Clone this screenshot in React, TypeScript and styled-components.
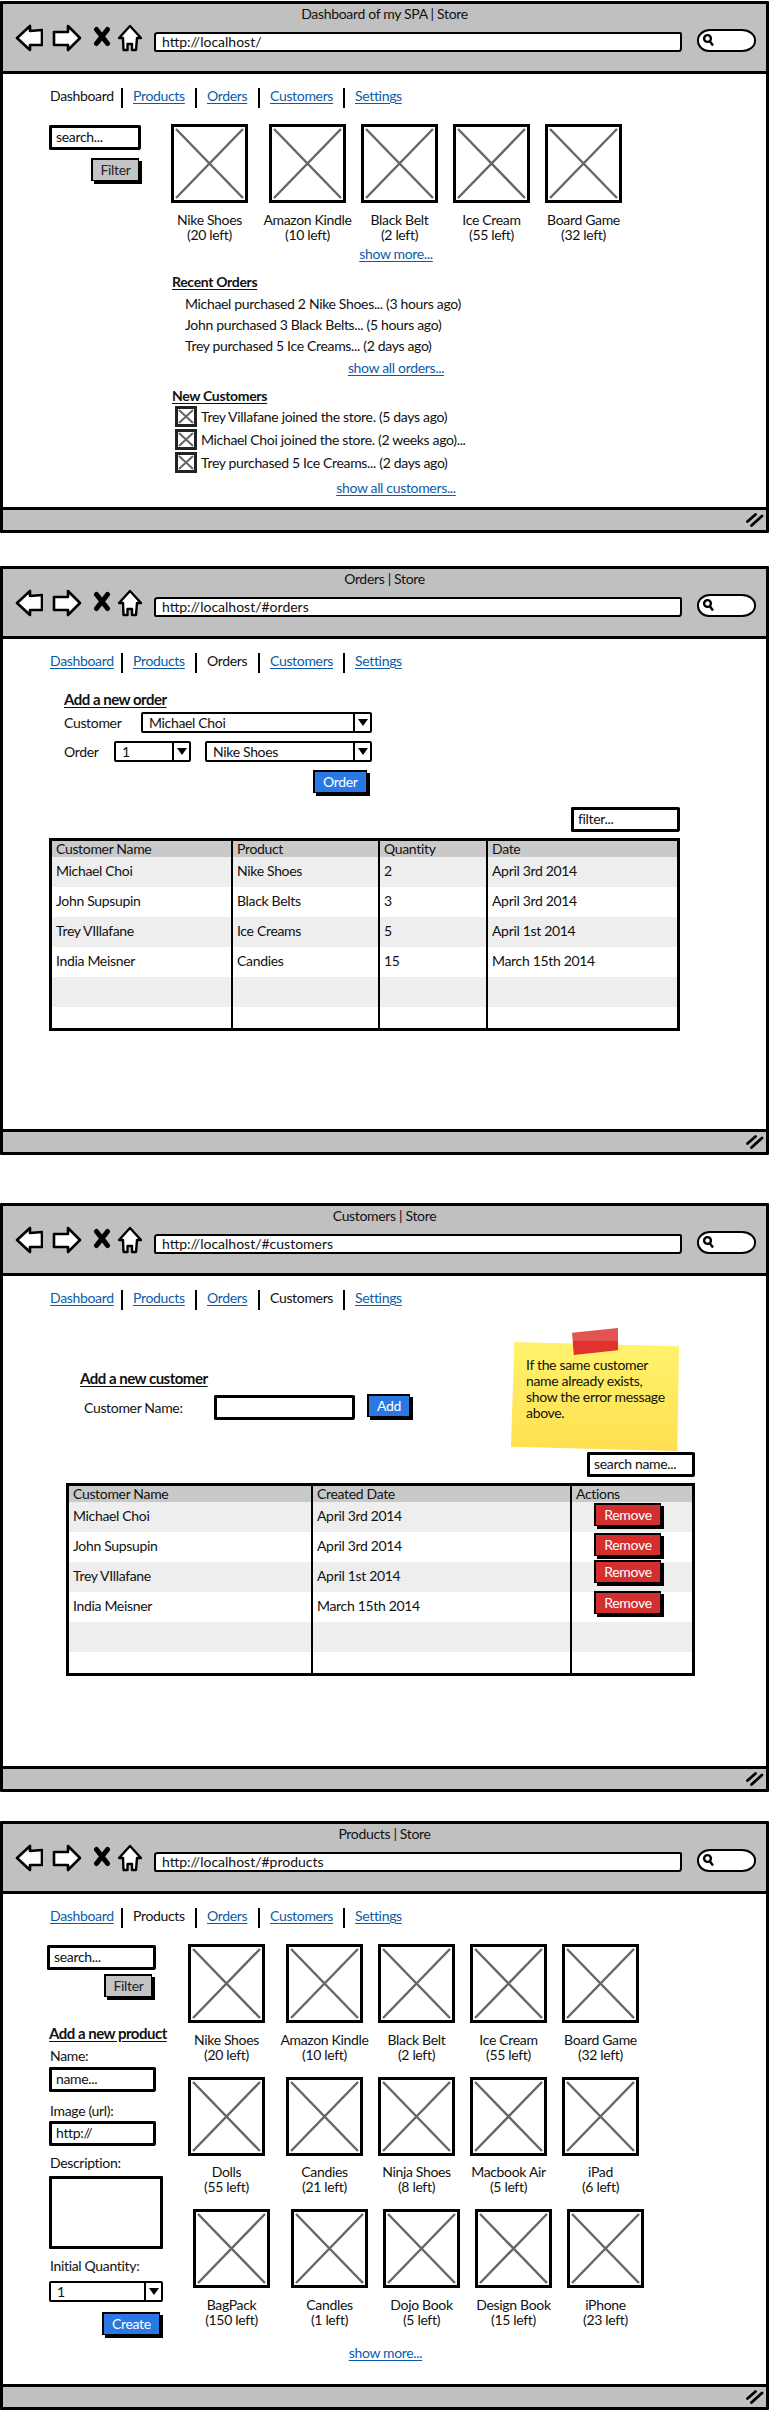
import React from "react";
import styled, { createGlobalStyle } from "styled-components";

const FONT = `Lato, "Liberation Sans", sans-serif`;

const GlobalStyle = createGlobalStyle`
  * { box-sizing: border-box; }
  body {
    margin: 0;
    background: #fff;
    color: #111;
    font-family: ${FONT};
    font-size: 14px;
    line-height: 15px;
    letter-spacing: -0.33px;
  }
`;

const TABS = [
  { name: "Dashboard", w: 74 },
  { name: "Products", w: 74 },
  { name: "Orders", w: 63 },
  { name: "Customers", w: 85 },
  { name: "Settings", w: 60 },
];

const Tab = ({ name, w, active, last }: { name: string; w: number; active: boolean; last: boolean }) => (
  <TabItem $w={w} $last={last}>
    {active ? <span>{name}</span> : <TextLink>{name}</TextLink>}
  </TabItem>
);

const BrowserWindow = ({
  title,
  url,
  active,
  height,
  top,
  children,
}: {
  title: string;
  url: string;
  active: string;
  height: number;
  top: number;
  children: React.ReactNode;
}) => (
  <Frame $h={height} $top={top}>
    <TitleBar>
      <TitleText>{title}</TitleText>
      <NavRow>
        <ToolIcon viewBox="0 0 28 28" $w={28}>
          <polygon points="2,14 15,2 15,7 27,6 27,21 15,21 15,26" fill="#fff" stroke="#000" strokeWidth="2.6" strokeLinejoin="round" />
        </ToolIcon>
        <ToolIcon viewBox="0 0 30 28" $w={30} $ml={9}>
          <polygon points="2,8 16,8 16,2 28,14 16,26 16,21 2,21" fill="#fff" stroke="#000" strokeWidth="2.6" strokeLinejoin="round" />
        </ToolIcon>
        <ToolIcon viewBox="0 0 18 28" $w={18} $ml={11}>
          <path d="M3.5 5.5 L14.5 19.5 M14.5 5.5 L3.5 19.5" stroke="#000" strokeWidth="5" strokeLinecap="round" />
        </ToolIcon>
        <ToolIcon viewBox="0 0 24 28" $w={24} $ml={7}>
          <polygon points="12,2 23,14 19,14 18,26 14,26 14,20 9.5,20 9.5,26 5.5,26 5,14 1,14" fill="#fff" stroke="#000" strokeWidth="2.4" strokeLinejoin="round" />
        </ToolIcon>
        <UrlBox>{url}</UrlBox>
        <SearchPill>
          <svg width="13" height="14" viewBox="0 0 13 14">
            <circle cx="5.5" cy="5.5" r="3.4" fill="#fff" stroke="#000" strokeWidth="2.4" />
            <path d="M8 8.5 L11 12.5" stroke="#000" strokeWidth="2.4" />
          </svg>
        </SearchPill>
      </NavRow>
    </TitleBar>
    <Content>
      <TabRow>
        {TABS.map((t, i) => (
          <Tab key={t.name} name={t.name} w={t.w} active={t.name === active} last={i === TABS.length - 1} />
        ))}
      </TabRow>
      {children}
    </Content>
    <BottomBar>
      <svg width="18" height="14" viewBox="0 0 18 14">
        <path d="M1.5 8.5 L9.5 1.5 M5.5 12.5 L16 3" stroke="#000" strokeWidth="2.8" strokeLinecap="round" />
      </svg>
    </BottomBar>
  </Frame>
);

const Placeholder = () => (
  <ImageBox>
    <svg width="100%" height="100%" viewBox="0 0 70 73" preserveAspectRatio="none">
      <path d="M2 2 L68 71 M68 2 L2 71" stroke="#666" strokeWidth="2.4" />
    </svg>
  </ImageBox>
);

const ProductCard = ({ name, left }: { name: string; left: string }) => (
  <Card>
    <Placeholder />
    <CardLabel>
      <span>{name}</span>
      <span>({left})</span>
    </CardLabel>
  </Card>
);

const ProductRow = ({ items, indent }: { items: string[][]; indent?: number }) => (
  <CardRow $indent={indent}>
    {items.map(([name, left]) => (
      <ProductCard key={name} name={name} left={left} />
    ))}
  </CardRow>
);

const Combo = ({ value, w }: { value: string; w: number }) => (
  <ComboBox $w={w}>
    <span>{value}</span>
    <ComboArrow />
  </ComboBox>
);

const Dashboard = () => (
  <TwoColumns>
    <Sidebar $w={122}>
      <Field placeholder="search..." $w={92} />
      <GreyButton $ml={42} $mt={8}>Filter</GreyButton>
    </Sidebar>
    <Main $w={450}>
      <ProductRow
        items={[
          ["Nike Shoes", "20 left"],
          ["Amazon Kindle", "10 left"],
          ["Black Belt", "2 left"],
          ["Ice Cream", "55 left"],
          ["Board Game", "32 left"],
        ]}
      />
      <LinkLine $top={4}><TextLink>show more...</TextLink></LinkLine>
      <SectionTitle $top={13}>Recent Orders</SectionTitle>
      <OrderList>
        <li>Michael purchased 2 Nike Shoes... (3 hours ago)</li>
        <li>John purchased 3 Black Belts... (5 hours ago)</li>
        <li>Trey purchased 5 Ice Creams... (2 days ago)</li>
      </OrderList>
      <LinkLine $top={4}><TextLink>show all orders...</TextLink></LinkLine>
      <SectionTitle $top={13}>New Customers</SectionTitle>
      <CustomerList>
        {[
          "Trey Villafane joined the store. (5 days ago)",
          "Michael Choi joined the store. (2 weeks ago)...",
          "Trey purchased 5 Ice Creams... (2 days ago)",
        ].map((text) => (
          <CustomerRow key={text}>
            <Avatar>
              <svg width="100%" height="100%" viewBox="0 0 16 15" preserveAspectRatio="none">
                <path d="M1 1 L15 14 M15 1 L1 14" stroke="#666" strokeWidth="2" />
              </svg>
            </Avatar>
            {text}
          </CustomerRow>
        ))}
      </CustomerList>
      <LinkLine $top={6}><TextLink>show all customers...</TextLink></LinkLine>
    </Main>
  </TwoColumns>
);

const ORDER_ROWS = [
  ["Michael Choi", "Nike Shoes", "2", "April 3rd 2014"],
  ["John Supsupin", "Black Belts", "3", "April 3rd 2014"],
  ["Trey VIllafane", "Ice Creams", "5", "April 1st 2014"],
  ["India Meisner", "Candies", "15", "March 15th 2014"],
  ["", "", "", ""],
  ["", "", "", ""],
];

const Orders = () => (
  <>
    <FormBlock $left={15} $top={18}>
      <FormTitle>Add a new order</FormTitle>
      <FormRow $top={4}>
        <RowLabel $w={77}>Customer</RowLabel>
        <Combo value="Michael Choi" w={231} />
      </FormRow>
      <FormRow $top={8}>
        <RowLabel $w={50}>Order</RowLabel>
        <Combo value="1" w={77} />
        <Combo value="Nike Shoes" w={167} />
      </FormRow>
      <BlueButton $ml={249} $mt={8}>Order</BlueButton>
    </FormBlock>
    <TableArea $w={631} $top={14}>
      <Field placeholder="filter..." $w={109} />
      <DataTable>
        <colgroup>
          <Col $w={181} /><Col $w={147} /><Col $w={108} /><col />
        </colgroup>
        <thead>
          <tr>
            <HeadCell>Customer Name</HeadCell>
            <HeadCell>Product</HeadCell>
            <HeadCell>Quantity</HeadCell>
            <HeadCell>Date</HeadCell>
          </tr>
        </thead>
        <tbody>
          {ORDER_ROWS.map((row, i) => (
            <BodyRow key={i} $short={i === ORDER_ROWS.length - 1}>
              {row.map((cell, j) => (
                <BodyCell key={j}>{cell}</BodyCell>
              ))}
            </BodyRow>
          ))}
        </tbody>
      </DataTable>
    </TableArea>
  </>
);

const CUSTOMER_ROWS = [
  { name: "Michael Choi", date: "April 3rd 2014", nudge: 1 },
  { name: "John Supsupin", date: "April 3rd 2014", nudge: 1 },
  { name: "Trey VIllafane", date: "April 1st 2014", nudge: -2 },
  { name: "India Meisner", date: "March 15th 2014", nudge: -1 },
  { name: "", date: "" },
  { name: "", date: "" },
];

const Customers = () => (
  <TableArea $w={629} $left={17} $top={32}>
    <NoteRow>
      <FormBlock $left={14} $top={28}>
        <FormTitle>Add a new customer</FormTitle>
        <FormRow $top={7}>
          <RowLabel $w={134} $pad={4}>Customer Name:</RowLabel>
          <Field $w={141} />
          <BlueButton $ml={-2}>Add</BlueButton>
        </FormRow>
      </FormBlock>
      <StickyNote>
        <Tape />
        If the same customer name already exists, show the error message above.
      </StickyNote>
    </NoteRow>
    <Field placeholder="search name..." $w={108} $mt={1} />
    <DataTable>
      <colgroup>
        <Col $w={244} /><Col $w={259} /><col />
      </colgroup>
      <thead>
        <tr>
          <HeadCell>Customer Name</HeadCell>
          <HeadCell>Created Date</HeadCell>
          <HeadCell>Actions</HeadCell>
        </tr>
      </thead>
      <tbody>
        {CUSTOMER_ROWS.map((row, i) => (
          <BodyRow key={i} $short={i === CUSTOMER_ROWS.length - 1}>
            <BodyCell>{row.name}</BodyCell>
            <BodyCell>{row.date}</BodyCell>
            <ActionCell>
              {row.nudge !== undefined && <RemoveButton $nudge={row.nudge}>Remove</RemoveButton>}
            </ActionCell>
          </BodyRow>
        ))}
      </tbody>
    </DataTable>
  </TableArea>
);

const Products = () => (
  <TwoColumns>
    <Sidebar $w={139}>
      <Field placeholder="search..." $w={109} $ml={-2} />
      <GreyButton $ml={55} $mt={4}>Filter</GreyButton>
      <FormTitle $top={25}>Add a new product</FormTitle>
      <FieldLabel $top={6}>Name:</FieldLabel>
      <Field placeholder="name..." $w={107} $mt={4} />
      <FieldLabel $top={11}>Image (url):</FieldLabel>
      <Field placeholder="http://" $w={107} $mt={3} />
      <FieldLabel $top={9}>Description:</FieldLabel>
      <TextBox />
      <FieldLabel $top={9}>Initial Quantity:</FieldLabel>
      <ComboSlot>
        <Combo value="1" w={114} />
      </ComboSlot>
      <BlueButton $ml={53} $mt={10}>Create</BlueButton>
    </Sidebar>
    <Main $w={456} $gap={15}>
      <ProductRow
        items={[
          ["Nike Shoes", "20 left"],
          ["Amazon Kindle", "10 left"],
          ["Black Belt", "2 left"],
          ["Ice Cream", "55 left"],
          ["Board Game", "32 left"],
        ]}
      />
      <ProductRow
        items={[
          ["Dolls", "55 left"],
          ["Candies", "21 left"],
          ["Ninja Shoes", "8 left"],
          ["Macbook Air", "5 left"],
          ["iPad", "6 left"],
        ]}
      />
      <ProductRow
        indent={5}
        items={[
          ["BagPack", "150 left"],
          ["Candles", "1 left"],
          ["Dojo Book", "5 left"],
          ["Design Book", "15 left"],
          ["iPhone", "23 left"],
        ]}
      />
      <LinkLine $top={3} $w={395}><TextLink>show more...</TextLink></LinkLine>
    </Main>
  </TwoColumns>
);

const App = () => (
  <>
    <GlobalStyle />
    <Page>
      <BrowserWindow title="Dashboard of my SPA | Store" url="http://localhost/" active="Dashboard" height={532} top={1}>
        <Dashboard />
      </BrowserWindow>
      <BrowserWindow title="Orders | Store" url="http://localhost/#orders" active="Orders" height={589} top={33}>
        <Orders />
      </BrowserWindow>
      <BrowserWindow title="Customers | Store" url="http://localhost/#customers" active="Customers" height={589} top={48}>
        <Customers />
      </BrowserWindow>
      <BrowserWindow title="Products | Store" url="http://localhost/#products" active="Products" height={589} top={29}>
        <Products />
      </BrowserWindow>
    </Page>
  </>
);

const Page = styled.div`
  width: 769px;
  display: flex;
  flex-direction: column;
  padding-bottom: 2px;
`;

const Frame = styled.section<{ $h: number; $top: number }>`
  height: ${(p) => p.$h}px;
  margin-top: ${(p) => p.$top}px;
  display: flex;
  flex-direction: column;
  border: 3px solid #000;
  border-radius: 1px;
  background: #fff;
`;

const TitleBar = styled.header`
  height: 70px;
  flex: none;
  background: #c0c0c0;
  border-bottom: 3px solid #000;
`;

const TitleText = styled.div`
  height: 20px;
  line-height: 20px;
  text-align: center;
`;

const NavRow = styled.div`
  display: flex;
  align-items: flex-start;
  padding-left: 12px;
`;

const ToolIcon = styled.svg<{ $w: number; $ml?: number }>`
  flex: none;
  width: ${(p) => p.$w}px;
  height: 28px;
  margin-left: ${(p) => p.$ml ?? 0}px;
`;

const UrlBox = styled.div`
  width: 528px;
  height: 20px;
  margin: 8px 0 0 12px;
  padding-left: 6px;
  line-height: 16px;
  letter-spacing: 0;
  background: #fff;
  border: 2.5px solid #000;
  border-radius: 4px 2px 3px 2px / 3px 2px 4px 2px;
`;

const SearchPill = styled.div`
  width: 59px;
  height: 23px;
  margin: 5px 0 0 15px;
  padding: 2px 0 0 3px;
  background: #fff;
  border: 2.5px solid #000;
  border-radius: 13px 14px 14px 12px / 11px;
`;

const Content = styled.main`
  flex: 1;
  min-height: 0;
  padding: 14px 0 0 46px;
`;

const BottomBar = styled.footer`
  height: 23px;
  flex: none;
  display: flex;
  justify-content: flex-end;
  align-items: center;
  padding-right: 2px;
  background: #c0c0c0;
  border-top: 3px solid #000;
`;

const TabRow = styled.nav`
  display: flex;
  height: 20px;
`;

const TabItem = styled.div<{ $w: number; $last: boolean }>`
  width: ${(p) => p.$w}px;
  padding-left: 10px;
  line-height: 16px;
  border-right: ${(p) => (p.$last ? "none" : "2px solid #000")};
  &:first-child {
    padding-left: 1px;
  }
`;

const TextLink = styled.a`
  color: #0b5ca8;
  text-decoration: underline;
  text-underline-offset: 2px;
`;

const TwoColumns = styled.div`
  display: flex;
  align-items: flex-start;
  margin-top: 16px;
`;

const Sidebar = styled.aside<{ $w: number }>`
  width: ${(p) => p.$w}px;
  flex: none;
  padding-top: 1px;
  display: flex;
  flex-direction: column;
  align-items: flex-start;
`;

const Main = styled.div<{ $w: number; $gap?: number }>`
  width: ${(p) => p.$w}px;
  display: flex;
  flex-direction: column;
  gap: ${(p) => p.$gap ?? 0}px;
`;

const Field = styled.input<{ $w: number; $ml?: number; $mt?: number }>`
  display: block;
  width: ${(p) => p.$w}px;
  height: 25px;
  flex: none;
  margin-left: ${(p) => p.$ml ?? 0}px;
  margin-top: ${(p) => p.$mt ?? 0}px;
  padding: 0 0 2px 4px;
  font: inherit;
  letter-spacing: inherit;
  color: #111;
  background: #fff;
  border: 3px solid #000;
  border-radius: 1px 3px 2px 2px / 2px 1px 3px 1px;
  outline: none;
  &::placeholder {
    color: #111;
    opacity: 1;
  }
`;

const RaisedButton = styled.button<{ $ml?: number; $mt?: number }>`
  display: block;
  height: 23px;
  margin-left: ${(p) => p.$ml ?? 0}px;
  margin-top: ${(p) => p.$mt ?? 0}px;
  margin-bottom: 3px;
  padding: 0 9px;
  font: inherit;
  letter-spacing: inherit;
  line-height: 16px;
  border: 2px solid #000;
  border-width: 2px 1px 1px 2px;
  box-shadow: 3px 3px 0 #000;
`;

const GreyButton = styled(RaisedButton)`
  width: 48px;
  padding: 0;
  color: #222;
  background: #c4c4c4;
`;

const BlueButton = styled(RaisedButton)`
  color: #fff;
  background: #2a78e4;
  padding: 0 8px;
`;

const RemoveButton = styled(RaisedButton)<{ $nudge: number }>`
  width: 67px;
  margin: ${(p) => p.$nudge}px 0 0 22px;
  padding: 0;
  color: #fff;
  background: #d32f2f;
`;

const CardRow = styled.div<{ $indent?: number }>`
  display: flex;
  gap: 15px;
  margin-left: ${(p) => p.$indent ?? 0}px;
`;

const Card = styled.article`
  width: 77px;
  display: flex;
  flex-direction: column;
  align-items: center;
  &:first-child {
    margin-right: 6px;
  }
`;

const ImageBox = styled.div`
  width: 77px;
  height: 79px;
  background: #fff;
  border: 3px solid #000;
`;

const CardLabel = styled.div`
  margin-top: 8.5px;
  display: flex;
  flex-direction: column;
  align-items: center;
  white-space: nowrap;
`;

const LinkLine = styled.div<{ $top: number; $w?: number }>`
  margin-top: ${(p) => p.$top}px;
  text-align: center;
  ${(p) => (p.$w ? `width: ${p.$w}px;` : "")}
`;

const SectionTitle = styled.h3<{ $top: number }>`
  margin: ${(p) => p.$top}px 0 0 1px;
  font-size: 14px;
  font-weight: 700;
  line-height: 15px;
  text-decoration: underline;
  text-underline-offset: 2px;
`;

const OrderList = styled.ul`
  list-style: none;
  margin: 4px 0 0;
  padding: 0 0 0 14px;
  line-height: 21px;
`;

const CustomerList = styled.div`
  margin-top: 2px;
  padding-left: 4px;
`;

const CustomerRow = styled.div`
  display: flex;
  align-items: center;
  gap: 4px;
  height: 23px;
`;

const Avatar = styled.div`
  width: 22px;
  height: 21px;
  flex: none;
  border: 3px solid #222;
`;

const FormBlock = styled.div<{ $left: number; $top: number }>`
  margin: ${(p) => p.$top}px 0 0 ${(p) => p.$left}px;
`;

const FormTitle = styled.h3<{ $top?: number }>`
  margin: ${(p) => p.$top ?? 0}px 0 0;
  font-size: 15px;
  font-weight: 700;
  line-height: 17px;
  letter-spacing: -0.5px;
  text-decoration: underline;
  text-underline-offset: 2px;
  white-space: nowrap;
`;

const FormRow = styled.div<{ $top: number }>`
  display: flex;
  align-items: center;
  gap: 14px;
  margin-top: ${(p) => p.$top}px;
`;

const RowLabel = styled.span<{ $w: number; $pad?: number }>`
  width: ${(p) => p.$w}px;
  margin-right: -14px;
  padding-left: ${(p) => p.$pad ?? 0}px;
  flex: none;
`;

const FieldLabel = styled.label<{ $top: number }>`
  display: block;
  margin-top: ${(p) => p.$top}px;
  margin-left: 1px;
`;

const ComboBox = styled.div<{ $w: number }>`
  width: ${(p) => p.$w}px;
  height: 21px;
  flex: none;
  display: flex;
  justify-content: space-between;
  padding-left: 6px;
  line-height: 17px;
  background: #fff;
  border: 2px solid #000;
  border-radius: 2px;
`;

const ComboArrow = styled.div`
  width: 17px;
  height: 100%;
  display: flex;
  align-items: center;
  justify-content: center;
  border-left: 2px solid #000;
  &::after {
    content: "";
    border-style: solid;
    border-width: 7px 5px 0;
    border-color: #000 transparent transparent;
  }
`;

const ComboSlot = styled.div`
  margin-top: 8px;
`;

const TextBox = styled.textarea`
  display: block;
  width: 114px;
  height: 73px;
  margin-top: 6px;
  resize: none;
  background: #fff;
  border: 3px solid #000;
  border-radius: 1px;
`;

const TableArea = styled.div<{ $w: number; $left?: number; $top: number }>`
  width: ${(p) => p.$w}px;
  margin: ${(p) => p.$top}px 0 0 ${(p) => p.$left ?? 0}px;
  display: flex;
  flex-direction: column;
  align-items: flex-end;
`;

const NoteRow = styled.div`
  width: 100%;
  display: flex;
  justify-content: space-between;
  padding-right: 16px;
`;

const StickyNote = styled.div`
  position: relative;
  width: 168px;
  height: 109px;
  padding: 15px 8px 0 15px;
  line-height: 16px;
  isolation: isolate;
  &::before {
    content: "";
    position: absolute;
    inset: 0;
    z-index: -1;
    background: linear-gradient(#fff36e, #ffdf50);
    clip-path: polygon(2% 0, 100% 4%, 99% 100%, 0 96%);
  }
`;

const Tape = styled.div`
  position: absolute;
  left: 61px;
  top: -14px;
  width: 46px;
  height: 27px;
  background: linear-gradient(#e2544f 50%, #e0322e 50%);
  clip-path: polygon(0 18%, 100% 0, 100% 82%, 4% 100%);
`;

const DataTable = styled.table`
  width: 100%;
  margin-top: 6px;
  table-layout: fixed;
  border-collapse: separate;
  border-spacing: 0;
  border: 3px solid #000;
`;

const Col = styled.col<{ $w: number }>`
  width: ${(p) => p.$w}px;
`;

const HeadCell = styled.th`
  height: 16px;
  padding: 0 0 1px 4px;
  font-weight: 400;
  text-align: left;
  background: #c9c9c9;
  border-right: 2px solid #000;
  &:last-child {
    border-right: none;
  }
`;

const BodyRow = styled.tr<{ $short: boolean }>`
  height: ${(p) => (p.$short ? 21 : 30)}px;
  &:nth-child(odd) {
    background: #eee;
  }
`;

const BodyCell = styled.td`
  padding: 6px 0 0 4px;
  vertical-align: top;
  white-space: nowrap;
  border-right: 2px solid #000;
  &:last-child {
    border-right: none;
  }
`;

const ActionCell = styled.td`
  padding: 0;
  vertical-align: top;
`;

export default App;
